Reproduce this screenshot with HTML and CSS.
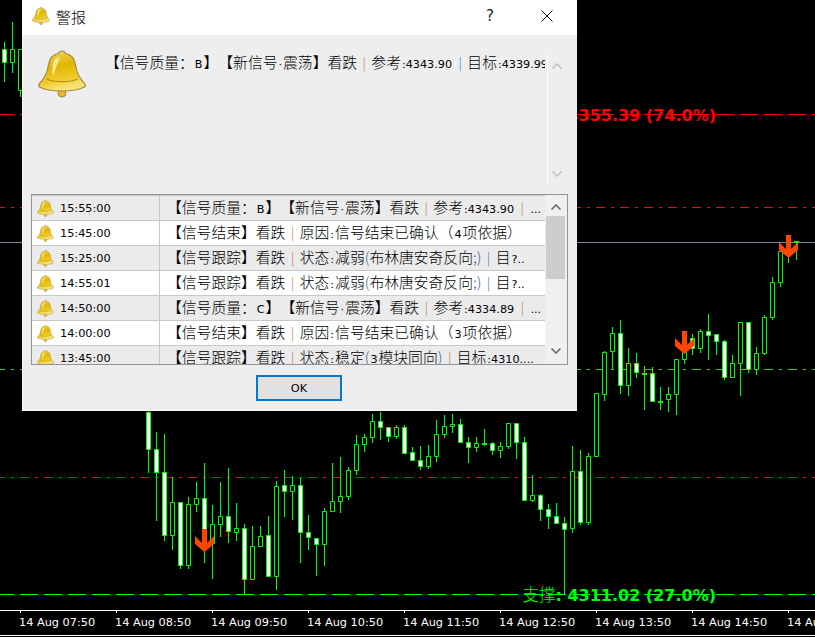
FILE: index.html
```html
<!DOCTYPE html>
<html lang="zh">
<head>
<meta charset="utf-8">
<title>警报</title>
<link rel="stylesheet" href="styles.css">
</head>
<body>
<svg class="chart" width="815" height="637" viewBox="0 0 815 637">
  <defs>
    <path id="arrow" d="M202 529h5v14l7-7v8l-9.500 8-9.500-8v-8l7 7z"/>
  </defs>
  <line class="l-red-dd" x1="0" x2="815" y1="207.500" y2="207.500"/>
  <line class="l-red-dd" x1="0" x2="815" y1="477.500" y2="477.500"/>
  <line class="l-green-dd" x1="0" x2="815" y1="369.500" y2="369.500"/>
  <line class="l-slate" x1="0" x2="815" y1="242.500" y2="242.500"/>
  <path class="wick" d="M4.500 42V82M12.500 22V73M20.500 49V97M148.500 410V473M156.500 432V521M164.500 434V541M172.500 477V550M180.500 502V569M188.500 497V569M196.500 482V512M204.500 463V563M212.500 505V579M220.500 482V537M228.500 468V543M236.500 503V541M244.500 524V595M252.500 526V579M260.500 526V546M268.500 516V577M276.500 481V590M284.500 470V517M292.500 476V520M300.500 478V563M308.500 515V550M316.500 538V576M324.500 508V566M332.500 463V511M340.500 457V513M348.500 467V500M356.500 435V475M364.500 434V452M372.500 414V443M380.500 412V440M388.500 427V442M396.500 425V439M404.500 425V454M412.500 447V461M420.500 446V470M428.500 445V469M436.500 420V462M444.500 415V438M452.500 414V433M460.500 419V443M468.500 437V463M476.500 437V452M484.500 429V446M492.500 442V455M500.500 442V458M508.500 423V449M516.500 423V459M524.500 437V500M532.500 475V502M540.500 494V521M548.500 504V529M556.500 503V524M564.500 517V594M572.500 446V533M580.500 450V525M588.500 453V525M596.500 393V456M604.500 351V401M612.500 327V370M620.500 320V394M628.500 348V396M636.500 353V378M644.500 366V410M652.500 367V402M660.500 387V410M668.500 387V412M676.500 359V415M684.500 345V364M692.500 334V355M700.500 329V353M708.500 314V360M716.500 334V355M724.500 340V380M732.500 355V377M740.500 322V396M748.500 322V373M756.500 347V375M764.500 315V355M772.500 277V320M780.500 251V287M788.500 242V263M796.500 242V260"/>
  <path class="body-hollow" d="M10.500 49.500h4V62.500h-4zM18.500 49.500h4V90.500h-4zM170.500 502.500h4V535.500h-4zM186.500 504.500h4V565.500h-4zM194.500 498.500h4V504.500h-4zM210.500 524.500h4V543.500h-4zM218.500 516.500h4V524.500h-4zM234.500 528.500h4V532.500h-4zM250.500 546.500h4V579.500h-4zM258.500 536.500h4V546.500h-4zM274.500 486.500h4V576.500h-4zM290.500 485.500h4V491.500h-4zM322.500 511.500h4V544.500h-4zM330.500 501.500h4V511.500h-4zM338.500 496.500h4V501.500h-4zM346.500 470.500h4V496.500h-4zM354.500 444.500h4V470.500h-4zM362.500 437.500h4V444.500h-4zM370.500 421.500h4V437.500h-4zM394.500 427.500h4V436.500h-4zM426.500 456.500h4V466.500h-4zM434.500 434.500h4V456.500h-4zM442.500 426.500h4V434.500h-4zM450.500 424.500h4V426.500h-4zM474.500 443.500h4V447.500h-4zM498.500 446.500h4V450.500h-4zM506.500 423.500h4V446.500h-4zM530.500 495.500h4V500.500h-4zM570.500 471.500h4V528.500h-4zM586.500 456.500h4V522.500h-4zM594.500 393.500h4V456.500h-4zM602.500 352.500h4V394.500h-4zM610.500 333.500h4V351.500h-4zM626.500 363.500h4V385.500h-4zM666.500 394.500h4V399.500h-4zM674.500 359.500h4V394.500h-4zM682.500 345.500h4V359.500h-4zM698.500 331.500h4V348.500h-4zM730.500 363.500h4V377.500h-4zM738.500 322.500h4V363.500h-4zM754.500 353.500h4V369.500h-4zM762.500 317.500h4V353.500h-4zM770.500 282.500h4V317.500h-4zM778.500 251.500h4V282.500h-4z"/>
  <path class="body-solid" d="M2.500 49.500h4V62.500h-4zM146.500 412.500h4V449.500h-4zM154.500 449.500h4V472.500h-4zM162.500 472.500h4V535.500h-4zM178.500 502.500h4V565.500h-4zM202.500 498.500h4V535.500h-4zM226.500 516.500h4V531.500h-4zM242.500 528.500h4V579.500h-4zM266.500 535.500h4V576.500h-4zM282.500 485.500h4V491.500h-4zM298.500 485.500h4V532.500h-4zM306.500 532.500h4V537.500h-4zM314.500 538.500h4V544.500h-4zM378.500 421.500h4V427.500h-4zM386.500 427.500h4V436.500h-4zM402.500 427.500h4V453.500h-4zM410.500 452.500h4V460.500h-4zM418.500 460.500h4V466.500h-4zM458.500 424.500h4V442.500h-4zM466.500 442.500h4V447.500h-4zM490.500 443.500h4V450.500h-4zM514.500 423.500h4V442.500h-4zM522.500 442.500h4V500.500h-4zM538.500 495.500h4V509.500h-4zM546.500 509.500h4V516.500h-4zM554.500 516.500h4V523.500h-4zM562.500 523.500h4V529.500h-4zM578.500 471.500h4V522.500h-4zM618.500 333.500h4V385.500h-4zM634.500 363.500h4V372.500h-4zM650.500 373.500h4V401.500h-4zM690.500 338.500h4V348.500h-4zM706.500 331.500h4V335.500h-4zM714.500 334.500h4V341.500h-4zM722.500 341.500h4V377.500h-4zM746.500 322.500h4V369.500h-4z"/>
  <path class="doji" d="M482 443h5v2h-5zM642 373h5v2h-5zM658 401h5v2h-5zM794 241h5v2h-5z"/>
  <line class="l-red" x1="-4" x2="815" y1="114.500" y2="114.500"/>
  <line class="l-green" x1="-4" x2="815" y1="594.500" y2="594.500"/>
  <text class="lbl lbl-red" x="716" y="121"><tspan class="lbl-cjk">阻力</tspan>: 4355.39 (74.0%)</text>
  <text class="lbl lbl-green" x="716" y="601"><tspan class="lbl-cjk">支撑</tspan>: 4311.02 (27.0%)</text>
  <use href="#arrow" class="arrow"/>
  <use href="#arrow" class="arrow" x="480" y="-198"/>
  <use href="#arrow" class="arrow" x="584" y="-294"/>
  <path class="axis" d="M0 610.500H815M20.500 610V613M116.500 610V613M212.500 610V613M308.500 610V613M404.500 610V613M500.500 610V613M596.500 610V613M692.500 610V613M788.500 610V613M0 635.500H815"/>
  <g class="tick">
    <text x="19" y="626">14 Aug 07:50</text>
    <text x="115" y="626">14 Aug 08:50</text>
    <text x="211" y="626">14 Aug 09:50</text>
    <text x="307" y="626">14 Aug 10:50</text>
    <text x="403" y="626">14 Aug 11:50</text>
    <text x="499" y="626">14 Aug 12:50</text>
    <text x="595" y="626">14 Aug 13:50</text>
    <text x="691" y="626">14 Aug 14:50</text>
    <text x="787" y="626">14 Aug 15:50</text>
  </g>
</svg>

<svg class="defs" width="0" height="0">
  <defs>
    <linearGradient id="gold" x1="0" y1="0" x2="0.250" y2="1">
      <stop offset="0" stop-color="#f3d96a"/>
      <stop offset="0.450" stop-color="#e2b700"/>
      <stop offset="0.800" stop-color="#efcc2c"/>
      <stop offset="1" stop-color="#f7e27a"/>
    </linearGradient>
    <symbol id="bell" viewBox="0 0 48 48">
      <circle cx="24" cy="43" r="4" fill="#e6bc2a" stroke="#a68a44" stroke-width="1"/>
      <path d="M24 1c2 0 3 1 3.500 2.500c6 1 9 5 10 11c1 8 3 13 9 19c1 1 1 2.500 0 3.500c-6 3-14 4-22.500 4s-17-1-22.500-4c-1-1-1-2.500 0-3.500c6-6 8-11 9-19c1-6 4-10 10-11c.5-1.500 1.500-2.500 3-2.500z" fill="url(#gold)" stroke="#a68a44" stroke-width="1.200"/>
      <path d="M8.500 29c8 3.500 23 3.500 31 0" fill="none" stroke="#b48f14" stroke-width="1.200"/>
      <path d="M15 13c1-3 3-5 7-6l-7 19c-1-4-1-9 0-13z" fill="#fff5c0" opacity=".75"/>
    </symbol>
  </defs>
</svg>

<div class="dialog">
  <header class="titlebar">
    <svg class="bell-s"><use href="#bell"/></svg>
    <span class="title">警报</span>
    <span class="help">?</span>
    <svg class="close" viewBox="0 0 12 12"><path d="M.5.500l11 11M11.500.500l-11 11"/></svg>
  </header>

  <section class="message">
    <svg class="bell-l"><use href="#bell"/></svg>
    <div class="msg-text">【信号质量：<span class="n">B</span>】【新信号<span class="n">·</span>震荡】看跌<span class="sep po">|</span>参考<span class="n">:4343.90</span><span class="sep pb">|</span>目标<span class="n">:4339.99</span></div>
    <div class="msg-scroll">
      <svg class="chev chev-dis" viewBox="0 0 10 6"><path d="M.5 5.500L5 1l4.500 4.500"/></svg>
      <svg class="chev chev-dis" viewBox="0 0 10 6"><path d="M.5.500L5 5l4.500-4.500"/></svg>
    </div>
  </section>

  <section class="list">
    <div class="rows">
      <div class="row">
        <div class="c-time"><svg class="bell-r"><use href="#bell"/></svg><span class="t">15:55:00</span></div>
        <div class="c-msg">【信号质量：<span class="n">B</span>】【新信号<span class="n">·</span>震荡】看跌<span class="sep po">|</span>参考<span class="n">:4343.90</span><span class="sep po">|</span><span class="n">...</span></div>
      </div>
      <div class="row">
        <div class="c-time"><svg class="bell-r"><use href="#bell"/></svg><span class="t">15:45:00</span></div>
        <div class="c-msg">【信号结束】看跌<span class="sep po">|</span>原因<span class="n">:</span>信号结束已确认（<span class="n">4</span>项依据）</div>
      </div>
      <div class="row">
        <div class="c-time"><svg class="bell-r"><use href="#bell"/></svg><span class="t">15:25:00</span></div>
        <div class="c-msg">【信号跟踪】看跌<span class="sep po">|</span>状态<span class="n">:</span>减弱<span class="pr">(</span>布林唐安奇反向<span class="pr">;)</span><span class="sep pb">|</span>目<span class="n">?..</span></div>
      </div>
      <div class="row">
        <div class="c-time"><svg class="bell-r"><use href="#bell"/></svg><span class="t">14:55:01</span></div>
        <div class="c-msg">【信号跟踪】看跌<span class="sep po">|</span>状态<span class="n">:</span>减弱<span class="pr">(</span>布林唐安奇反向<span class="pr">;)</span><span class="sep pb">|</span>目<span class="n">?..</span></div>
      </div>
      <div class="row">
        <div class="c-time"><svg class="bell-r"><use href="#bell"/></svg><span class="t">14:50:00</span></div>
        <div class="c-msg">【信号质量：<span class="n">C</span>】【新信号<span class="n">·</span>震荡】看跌<span class="sep po">|</span>参考<span class="n">:4334.89</span><span class="sep po">|</span><span class="n">...</span></div>
      </div>
      <div class="row">
        <div class="c-time"><svg class="bell-r"><use href="#bell"/></svg><span class="t">14:00:00</span></div>
        <div class="c-msg">【信号结束】看跌<span class="sep po">|</span>原因<span class="n">:</span>信号结束已确认（<span class="n">3</span>项依据）</div>
      </div>
      <div class="row">
        <div class="c-time"><svg class="bell-r"><use href="#bell"/></svg><span class="t">13:45:00</span></div>
        <div class="c-msg">【信号跟踪】看跌<span class="sep po">|</span>状态<span class="n">:</span>稳定<span class="pr">(</span><span class="n">3</span>模块同向<span class="pr">)</span><span class="sep po">|</span>目标<span class="n">:4310....</span></div>
      </div>
    </div>
    <div class="vscroll">
      <svg class="chev" viewBox="0 0 10 6"><path d="M.5 5.500L5 1l4.500 4.500"/></svg>
      <div class="track"><div class="thumb"></div></div>
      <svg class="chev" viewBox="0 0 10 6"><path d="M.5.500L5 5l4.500-4.500"/></svg>
    </div>
  </section>

  <footer class="actions"><button class="ok" type="button">OK</button></footer>
</div>
</body>
</html>
```
FILE: styles.css
```css
* { box-sizing: border-box; }
html, body { margin: 0; padding: 0; }
body {
  width: 815px;
  height: 637px;
  position: relative;
  overflow: hidden;
  background: #000;
  font-family: "Noto Sans CJK SC", sans-serif;
}

/* chart canvas */
.chart { position: absolute; left: 0; top: 0; display: block; }
.defs { position: absolute; }
.wick { stroke: #00ff00; stroke-width: 1; fill: none; }
.body-hollow { stroke: #00ff00; stroke-width: 1; fill: #000; }
.body-solid { stroke: #00ff00; stroke-width: 1; fill: #fff; }
.doji { fill: #00ff00; }
.l-red { stroke: #ff0000; stroke-dasharray: 18 6; }
.l-green { stroke: #00ff00; stroke-dasharray: 18 6; }
.l-red-dd { stroke: #d81414; stroke-dasharray: 9 6 3 6; stroke-dashoffset: 4; }
.l-green-dd { stroke: #2fd02f; stroke-dasharray: 9 6 3 6; stroke-dashoffset: 4; }
.l-slate { stroke: #778899; }
.lbl { font: bold 16px "DejaVu Sans", "Noto Sans CJK SC", sans-serif; text-anchor: end; }
.lbl-cjk { font-weight: 300; font-size: 16.500px; }
.lbl-red { fill: #ff0000; }
.lbl-green { fill: #00ff00; }
.arrow { fill: #ff4500; }
.axis { stroke: #fff; fill: none; }
.tick text { font: 11.300px "DejaVu Sans", sans-serif; fill: #fff; }

/* dialog window */
.dialog {
  position: absolute;
  left: 22px;
  top: 0;
  width: 555px;
  height: 411px;
  background: #eeeeee;
  border-left: 1px solid #f8f8f8;
  border-bottom: 1px solid #f8f8f8;
  display: flex;
  flex-direction: column;
  color: #000;
  font-size: 14.800px;
  font-weight: 300;
  text-spacing-trim: space-all;
}
.titlebar {
  height: 35px;
  padding-bottom: 3px;
  background: #fff;
  display: flex;
  align-items: center;
  flex: none;
}
.bell-s { width: 18px; height: 18px; margin-left: 9px; flex: none; }
.title { margin-left: 6px; font-size: 15px; }
.help { margin-left: auto; font: 15px "DejaVu Sans", sans-serif; color: #222; }
.close { width: 12px; height: 12px; margin: 0 24px 0 47px; fill: none; stroke: #111; stroke-width: 1; }

.message {
  height: 159px;
  flex: none;
  display: flex;
  padding-top: 20px;
}
.bell-l { width: 48px; height: 48px; margin: -5px 0 0 15px; flex: none; }
.msg-text {
  width: 440px;
  height: 129px;
  margin-left: 19px;
  margin-top: -1px;
  overflow: hidden;
  white-space: nowrap;
  line-height: 15px;
}
.msg-scroll {
  width: 20px;
  height: 129px;
  margin-left: 2px;
  border-left: 1px solid #fff;
  padding: 8px 0 7px 4px;
  display: flex;
  flex-direction: column;
  justify-content: space-between;
}
.n { font: 11.200px "DejaVu Sans", sans-serif; margin: 0 1px; }
.sep { font-size: 13px; margin: 0 5.500px; }
.po { color: #b9702d; }
.pb { color: #2a6fb5; }
.pr { color: #2a5f9f; }

.chev { width: 10px; height: 6px; display: block; fill: none; stroke: #666; stroke-width: 1.500; flex: none; }
.chev-dis { stroke: #bdbdbd; }

.list {
  margin: 0 9px 0 8px;
  height: 171px;
  flex: none;
  border: 1px solid #8f959b;
  background: #f0f0f0;
  display: flex;
  overflow: hidden;
}
.rows { width: 513px; flex: none; overflow: hidden; }
.row {
  height: 25px;
  display: flex;
  border-top: 1px solid #c8c8c8;
  background: #fff;
}
.row:nth-child(odd) { background: #ebebeb; }
.c-time {
  width: 128px;
  flex: none;
  display: flex;
  align-items: center;
  border-right: 1px solid #c8c8c8;
}
.bell-r { width: 17px; height: 17px; margin-left: 5px; flex: none; }
.t { margin-left: 6px; font: 11.300px "DejaVu Sans", sans-serif; }
.c-msg {
  flex: 1;
  min-width: 0;
  padding-left: 7px;
  line-height: 22px;
  white-space: nowrap;
  overflow: hidden;
}

.vscroll {
  width: 22px;
  flex: none;
  display: flex;
  flex-direction: column;
  align-items: center;
  padding: 9px 2px 10px 1px;
}
.track { flex: 1; width: 19px; margin: 6px 0; }
.thumb { height: 63px; background: #cdcdcd; }

.actions { flex: 1; display: flex; justify-content: center; padding: 10px 2px 0 0; }
.ok {
  width: 86px;
  height: 26px;
  border: 2px solid #0078d7;
  background: #e1e1e1;
  padding: 0;
  font: 11.300px "DejaVu Sans", sans-serif;
  color: #000;
}
```
